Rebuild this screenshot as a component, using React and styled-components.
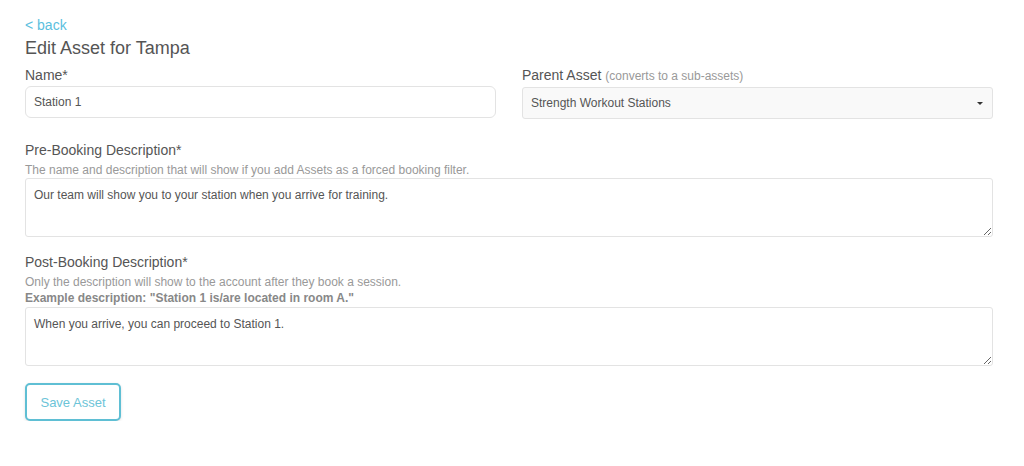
import React from "react";
import styled, { createGlobalStyle } from "styled-components";

const Global = createGlobalStyle`
  html, body { margin: 0; padding: 0; background: #fff; }
  body { font-family: "Liberation Sans", Arial, sans-serif; color: #555; }
  * { box-sizing: border-box; }
`;

const Page = styled.div`
  padding: 16px 31px 0 25px;
`;

const BackLink = styled.a`
  display: block;
  color: #5bc0de;
  font-size: 14px;
  line-height: 18px;
  text-decoration: none;
`;

const Title = styled.h1`
  margin: 2px 0 0;
  font-size: 18px;
  font-weight: 400;
  line-height: 24px;
  color: #555;
`;

const Row = styled.div`
  display: grid;
  grid-template-columns: 1fr 1fr;
  column-gap: 26px;
  margin-top: 6px;
`;

const Field = styled.div`
  display: flex;
  flex-direction: column;
  margin-top: ${(p) => p.$top || 0}px;
`;

const Label = styled.label`
  font-size: 14px;
  line-height: 18px;
  color: #555;
  margin-bottom: ${(p) => p.$mb ?? 2}px;
`;

const Aside = styled.span`
  font-size: 12px;
  color: #999;
`;

const Help = styled.div`
  font-size: 12px;
  line-height: 16px;
  margin-top: ${(p) => p.$top || 0}px;
  color: ${(p) => (p.$bold ? "#888" : "#999")};
  font-weight: ${(p) => (p.$bold ? 700 : 400)};
`;

const TextInput = styled.input`
  height: 32px;
  border: 1px solid #e3e3e3;
  border-radius: 6px;
  padding: 0 8px;
  font-family: inherit;
  font-size: 12px;
  color: #555;
  outline: none;
`;

const SelectBox = styled.div`
  height: 32px;
  border: 1px solid #e3e3e3;
  border-radius: 3px;
  background: #f9f9f9;
  padding: 0 8px;
  display: flex;
  align-items: center;
  justify-content: space-between;
  font-size: 12px;
  color: #555;
`;

const Caret = styled.span`
  width: 0;
  height: 0;
  border-left: 3px solid transparent;
  border-right: 3px solid transparent;
  border-top: 3px solid #333;
  margin-right: 1px;
`;

const TextArea = styled.textarea`
  height: 59px;
  border: 1px solid #e3e3e3;
  border-radius: 3px;
  padding: 8px 8px;
  margin-top: ${(p) => p.$top || 0}px;
  font-family: inherit;
  font-size: 12px;
  line-height: 16px;
  color: #555;
  resize: vertical;
  outline: none;
`;

const Button = styled.button`
  margin-top: 17px;
  width: 96px;
  height: 38px;
  border: 2px solid #5fbfd4;
  border-radius: 5px;
  background: #fff;
  color: #6cc4d8;
  font-family: inherit;
  font-size: 13px;
  box-shadow: 0 1px 3px rgba(0, 0, 0, 0.12);
  cursor: pointer;
`;

export default function App() {
  return (
    <>
      <Global />
      <Page>
        <BackLink href="#">&lt; back</BackLink>
        <Title>Edit Asset for Tampa</Title>
        <Row>
          <Field>
            <Label>Name*</Label>
            <TextInput defaultValue="Station 1" />
          </Field>
          <Field>
            <Label>
              Parent Asset <Aside>(converts to a sub-assets)</Aside>
            </Label>
            <SelectBox>
              <span>Strength Workout Stations</span>
              <Caret />
            </SelectBox>
          </Field>
        </Row>
        <Field $top={22}>
          <Label $mb={0}>Pre-Booking Description*</Label>
          <Help $top={3}>The name and description that will show if you add Assets as a forced booking filter.</Help>
          <TextArea defaultValue="Our team will show you to your station when you arrive for training." />
        </Field>
        <Field $top={16}>
          <Label $mb={0}>Post-Booking Description*</Label>
          <Help $top={3}>Only the description will show to the account after they book a session.</Help>
          <Help $bold>Example description: "Station 1 is/are located in room A."</Help>
          <TextArea $top={1} defaultValue="When you arrive, you can proceed to Station 1." />
        </Field>
        <Button>Save Asset</Button>
      </Page>
    </>
  );
}
